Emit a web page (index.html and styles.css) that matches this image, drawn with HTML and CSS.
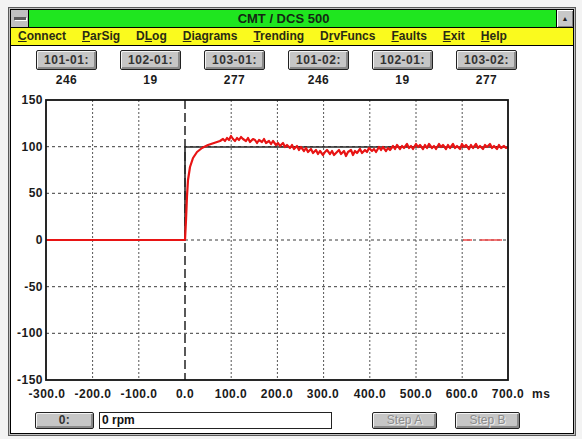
FILE: index.html
```html
<!DOCTYPE html>
<html lang="en">
<head>
  <meta charset="UTF-8">
  <title>CMT / DCS 500</title>
  <link rel="stylesheet" href="styles.css">
</head>
<body>

<div class="window">
  <div class="frame">
    <div class="titlebar">
      <span class="sysbox"><span class="sysbar"></span></span>
      <span class="title">CMT / DCS 500</span>
      <span class="maxbox">&#9650;</span>
    </div>

    <div class="menubar">
      <span class="menu-item"><u>C</u>onnect</span>
      <span class="menu-item"><u>P</u>arSig</span>
      <span class="menu-item">D<u>L</u>og</span>
      <span class="menu-item"><u>D</u>iagrams</span>
      <span class="menu-item"><u>T</u>rending</span>
      <span class="menu-item">D<u>r</u>vFuncs</span>
      <span class="menu-item"><u>F</u>aults</span>
      <span class="menu-item"><u>E</u>xit</span>
      <span class="menu-item"><u>H</u>elp</span>
    </div>

    <div class="client">
      <div class="readouts">
        <div class="readout"><span class="btn">101-01:</span><span class="value">246</span></div>
        <div class="readout"><span class="btn">102-01:</span><span class="value">19</span></div>
        <div class="readout"><span class="btn">103-01:</span><span class="value">277</span></div>
        <div class="readout"><span class="btn">101-02:</span><span class="value">246</span></div>
        <div class="readout"><span class="btn">102-01:</span><span class="value">19</span></div>
        <div class="readout"><span class="btn">103-02:</span><span class="value">277</span></div>
      </div>

      <!-- step response plot, drawn in window coordinates -->
      <svg class="chart" width="562" height="316" viewBox="11 88 562 316">
        <g class="grid-h">
          <line x1="46" y1="146.7" x2="508" y2="146.7"/>
          <line x1="46" y1="193.3" x2="508" y2="193.3"/>
          <line x1="185" y1="240" x2="508" y2="240"/>
          <line x1="46" y1="286.7" x2="508" y2="286.7"/>
          <line x1="46" y1="333.3" x2="508" y2="333.3"/>
        </g>
        <g class="grid-v">
          <line x1="92.6" y1="100" x2="92.6" y2="380"/>
          <line x1="138.8" y1="100" x2="138.8" y2="380"/>
          <line x1="231.2" y1="100" x2="231.2" y2="380"/>
          <line x1="277.4" y1="100" x2="277.4" y2="380"/>
          <line x1="323.6" y1="100" x2="323.6" y2="380"/>
          <line x1="369.8" y1="100" x2="369.8" y2="380"/>
          <line x1="416" y1="100" x2="416" y2="380"/>
          <line x1="462.2" y1="100" x2="462.2" y2="380"/>
        </g>
        <line class="trigger" x1="185" y1="100" x2="185" y2="380"/>

        <polyline class="setpoint" points="46,240 185,240 185,147 508,147"/>
        <polyline class="actual" points="46,240 185,240 186,220 187,196 188,180 190,167 193,158 197,152 202,148 208,145 214,143 220,141
          223,139 225,141 227,138 229,140 231,136 233,139 235,141 237,138 239,140 241,137 243,139 246,141 248,138 250,142 253,139
          255,140 257,143 259,140 262,142 264,139 266,143 269,141 271,144 273,141 276,145 278,143 280,146 283,143 285,147 287,145
          290,148 292,145 294,149 297,146 299,150 301,147 304,151 306,148 308,152 311,149 313,153 316,150 318,154 320,151 323,155
          325,152 327,150 330,154 332,151 334,155 337,152 339,150 341,154 344,151 346,156 348,152 351,150 353,155 355,151 357,153
          360,149 362,153 365,150 367,152 369,148 372,151 374,149 376,152 379,147 381,150 383,147 386,151 388,148 390,150 393,146
          395,149 397,145 400,149 402,146 404,148 407,144 409,148 411,146 413,149 416,144 418,147 420,145 423,149 425,145 427,148
          429,144 432,148 434,146 436,149 439,144 441,147 443,145 446,149 448,145 450,148 453,144 455,148 457,146 460,149 462,144
          464,147 466,145 469,149 471,145 473,148 476,144 478,148 480,146 483,149 485,145 487,147 490,144 492,148 494,146 497,149
          499,145 501,148 504,146 506,148 508,147"/>
        <line class="marker" x1="463" y1="240" x2="472" y2="240"/>
        <line class="marker" x1="480" y1="240" x2="502" y2="240"/>

        <rect class="frame-line" x="46" y="100" width="462" height="280"/>

        <g class="label-y">
          <text x="43" y="104">150</text>
          <text x="43" y="151">100</text>
          <text x="43" y="197">50</text>
          <text x="43" y="244">0</text>
          <text x="43" y="291">-50</text>
          <text x="43" y="337">-100</text>
          <text x="43" y="384">-150</text>
        </g>
        <g class="label-x">
          <text x="47" y="398">-300.0</text>
          <text x="93" y="398">-200.0</text>
          <text x="139" y="398">-100.0</text>
          <text x="185" y="398">0.0</text>
          <text x="231" y="398">100.0</text>
          <text x="277" y="398">200.0</text>
          <text x="323" y="398">300.0</text>
          <text x="370" y="398">400.0</text>
          <text x="416" y="398">500.0</text>
          <text x="462" y="398">600.0</text>
          <text x="508" y="398">700.0</text>
        </g>
        <text class="unit" x="532" y="398">ms</text>
      </svg>

      <div class="controls">
        <span class="btn btn-zero">0:</span>
        <span class="field">0 rpm</span>
        <span class="btn btn-step">Step A</span>
        <span class="btn btn-step">Step B</span>
      </div>
    </div>
  </div>
</div>

</body>
</html>
```

FILE: styles.css
```css
body {
  margin: 0;
  background-color: #f3f3f3;
  font-family: "Liberation Sans", Arial, sans-serif;
  color: #111;
}

.window {
  box-sizing: border-box;
  width: 568px;
  height: 429px;
  margin: 7px 0 0 8px;
  padding: 1px;
  border: 1px solid #5a5a5a;
  background-color: #c0c0c0;
}

.frame {
  box-sizing: border-box;
  height: 100%;
  border: 1px solid #000;
  background-color: #fff;
  display: flex;
  flex-direction: column;
}

/* title bar */
.titlebar {
  display: flex;
  height: 17px;
  border-bottom: 1px solid #000;
  background-color: #1fe61f;
}

.sysbox {
  width: 17px;
  border-right: 1px solid #000;
  background-color: #c0c0c0;
  display: flex;
  align-items: center;
  justify-content: center;
}

.sysbar {
  width: 12px;
  height: 3px;
  background-color: #5c5c5c;
  box-shadow: 1px 1px 0 #fff;
}

.title {
  flex: 1;
  text-align: center;
  padding-right: 18px;
  font-size: 13px;
  font-weight: bold;
  line-height: 17px;
  color: #142814;
}

.maxbox {
  width: 16px;
  border-left: 1px solid #000;
  background-color: #c8c8c8;
  box-shadow: inset 1px 1px 0 #fff, inset -1px -1px 0 #808080;
  font-size: 7px;
  line-height: 17px;
  text-align: center;
  color: #222;
}

/* menu */
.menubar {
  display: flex;
  gap: 16px;
  height: 17px;
  padding-left: 7px;
  border-bottom: 1px solid #000;
  background-color: #fafa1e;
}

.menu-item {
  font-size: 12px;
  font-weight: bold;
  line-height: 17px;
  color: #2a2a14;
}

/* client area */
.client {
  flex: 1;
  display: flex;
  flex-direction: column;
}

.readouts {
  display: flex;
  gap: 23px;
  padding: 4px 0 0 25px;
}

.readout {
  width: 61px;
  display: flex;
  flex-direction: column;
  align-items: center;
}

.btn {
  box-sizing: border-box;
  display: block;
  border: 1px solid #222;
  border-radius: 2px;
  background-color: #c6c6c6;
  box-shadow: inset 1px 1px 0 #f4f4f4, inset -2px -2px 0 #8a8a8a;
  font-size: 12px;
  font-weight: bold;
  letter-spacing: 0.5px;
  text-align: center;
  color: #333;
}

.readout .btn {
  width: 61px;
  height: 20px;
  line-height: 18px;
}

.value {
  margin-top: 2px;
  font-size: 12px;
  font-weight: bold;
  letter-spacing: 0.5px;
  line-height: 16px;
  color: #1a1a1a;
}

/* chart */
.chart {
  display: block;
}

.grid-h line {
  stroke: #3a3a3a;
  stroke-width: 1;
  stroke-dasharray: 3 3;
}

.grid-v line {
  stroke: #555;
  stroke-width: 1;
  stroke-dasharray: 2 2;
}

.trigger {
  stroke: #222;
  stroke-width: 1.5;
  stroke-dasharray: 9 4;
}

.setpoint {
  fill: none;
  stroke: #2a2a2a;
  stroke-width: 1.6;
}

.actual {
  fill: none;
  stroke: #e81414;
  stroke-width: 2.2;
  stroke-linejoin: round;
}

.marker {
  stroke: #f04a4a;
  stroke-width: 1.5;
}

.frame-line {
  fill: none;
  stroke: #111;
  stroke-width: 1.8;
}

.label-y text,
.label-x text,
.unit {
  font-family: "Liberation Sans", Arial, sans-serif;
  font-size: 12px;
  font-weight: bold;
  letter-spacing: 0.5px;
  fill: #1a1a1a;
}

.label-y text {
  text-anchor: end;
}

.label-x text {
  text-anchor: middle;
}

/* bottom controls */
.controls {
  display: flex;
  align-items: center;
  height: 17px;
  margin-top: 8px;
  padding-left: 24px;
}

.btn-zero {
  width: 59px;
  height: 17px;
  line-height: 15px;
}

.field {
  box-sizing: border-box;
  width: 233px;
  height: 17px;
  margin-left: 5px;
  padding-left: 2px;
  border: 1px solid #222;
  font-size: 12px;
  font-weight: bold;
  line-height: 15px;
  color: #111;
}

.btn-step {
  width: 65px;
  height: 17px;
  margin-left: 18px;
  line-height: 15px;
  font-weight: normal;
  letter-spacing: 0;
  color: #8c8c8c;
  text-shadow: 1px 1px 0 #eee;
}

.field + .btn-step {
  margin-left: 40px;
}
```
